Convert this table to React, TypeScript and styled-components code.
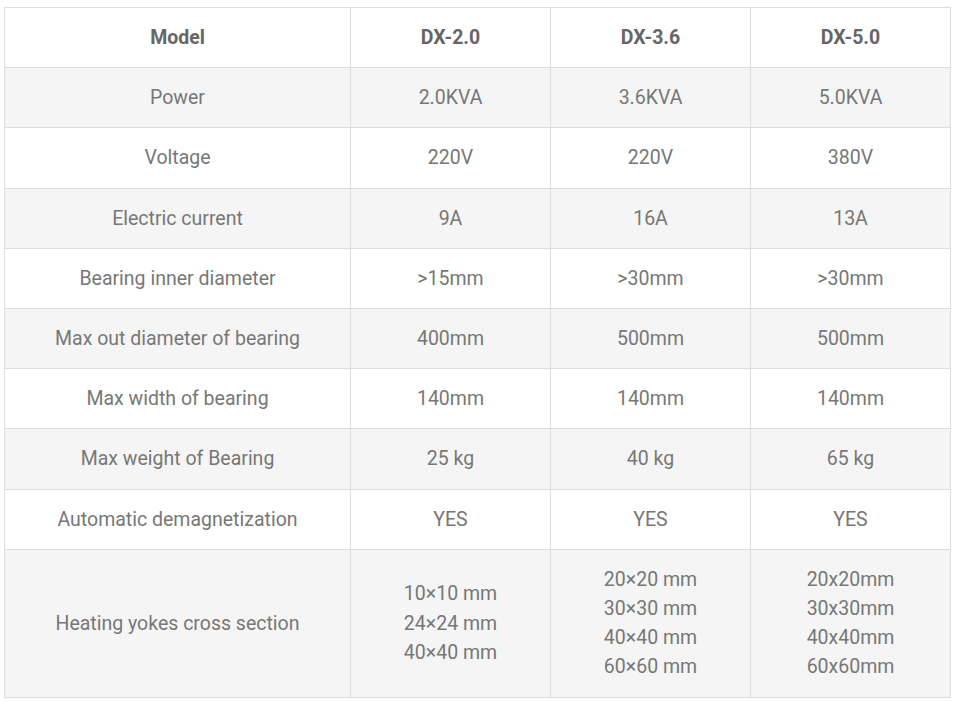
import React from 'react';
import styled, { createGlobalStyle } from 'styled-components';

const GlobalStyle = createGlobalStyle`
  body {
    margin: 0;
    background: #fff;
    font-family: Roboto, "Liberation Sans", Arial, sans-serif;
  }
`;

const Page = styled.div`
  padding: 7px 7px 0 4px;
`;

const Table = styled.table`
  width: 946px;
  border-collapse: collapse;
  table-layout: fixed;
  font-size: 19.5px;
  line-height: 29.2px;
  color: #777;
`;

const Row = styled.tr<{ $shaded?: boolean }>`
  background: ${({ $shaded }) => ($shaded ? '#f5f5f5' : '#fff')};
`;

const Cell = styled.td`
  border: 1px solid #ddd;
  padding: 15px 8px;
  text-align: center;
  vertical-align: middle;
`;

const HeadCell = styled(Cell).attrs({ as: 'th' })`
  font-weight: 700;
  color: #666;
`;

type Spec = { label: string; values: string[][] };

const models = ['DX-2.0', 'DX-3.6', 'DX-5.0'];

const specs: Spec[] = [
  { label: 'Power', values: [['2.0KVA'], ['3.6KVA'], ['5.0KVA']] },
  { label: 'Voltage', values: [['220V'], ['220V'], ['380V']] },
  { label: 'Electric current', values: [['9A'], ['16A'], ['13A']] },
  { label: 'Bearing inner diameter', values: [['>15mm'], ['>30mm'], ['>30mm']] },
  { label: 'Max out diameter of bearing', values: [['400mm'], ['500mm'], ['500mm']] },
  { label: 'Max width of bearing', values: [['140mm'], ['140mm'], ['140mm']] },
  { label: 'Max weight of Bearing', values: [['25 kg'], ['40 kg'], ['65 kg']] },
  { label: 'Automatic demagnetization', values: [['YES'], ['YES'], ['YES']] },
  {
    label: 'Heating yokes cross section',
    values: [
      ['10×10 mm', '24×24 mm', '40×40 mm'],
      ['20×20 mm', '30×30 mm', '40×40 mm', '60×60 mm'],
      ['20x20mm', '30x30mm', '40x40mm', '60x60mm'],
    ],
  },
];

export default function App() {
  return (
    <Page>
      <GlobalStyle />
      <Table>
        <colgroup>
          <col style={{ width: 346 }} />
          <col style={{ width: 200 }} />
          <col style={{ width: 200 }} />
          <col style={{ width: 200 }} />
        </colgroup>
        <thead>
          <Row>
            <HeadCell>Model</HeadCell>
            {models.map((m) => (
              <HeadCell key={m}>{m}</HeadCell>
            ))}
          </Row>
        </thead>
        <tbody>
          {specs.map((s, i) => (
            <Row key={s.label} $shaded={i % 2 === 0}>
              <Cell>{s.label}</Cell>
              {s.values.map((lines, j) => (
                <Cell key={j}>
                  {lines.map((l, k) => (
                    <React.Fragment key={k}>
                      {k > 0 && <br />}
                      {l}
                    </React.Fragment>
                  ))}
                </Cell>
              ))}
            </Row>
          ))}
        </tbody>
      </Table>
    </Page>
  );
}
